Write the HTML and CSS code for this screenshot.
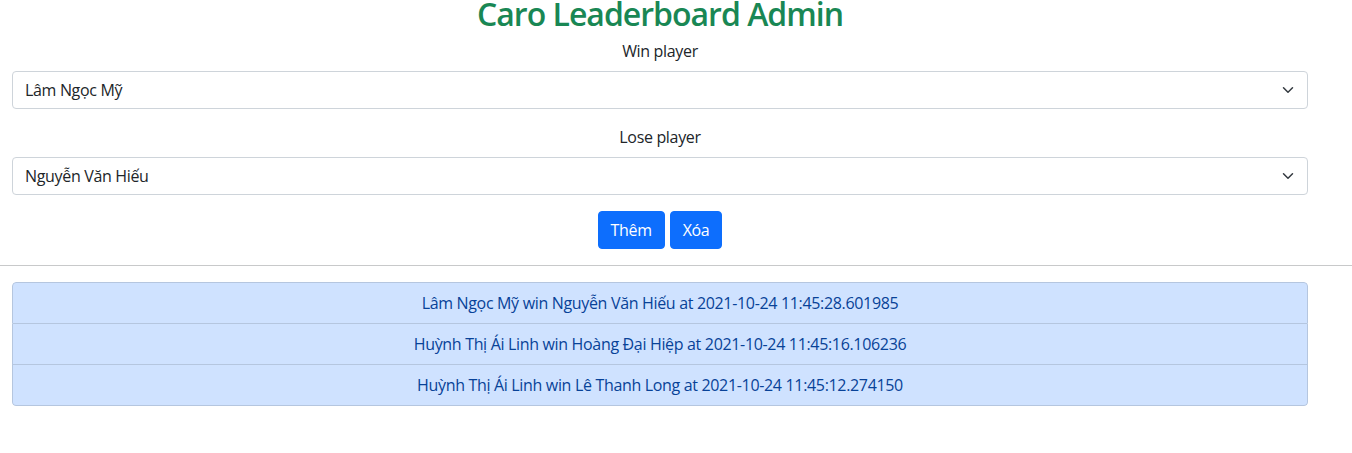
FILE: index.html
```html
<!DOCTYPE html>
<html lang="vi">
<head>
<meta charset="utf-8">
<title>Caro Leaderboard Admin</title>
<link rel="stylesheet" href="styles.css">
</head>
<body>
<div class="container">
  <h1 class="title">Caro Leaderboard Admin</h1>
  <form class="form">
    <div class="field">
      <label class="label" for="win">Win player</label>
      <div class="select-wrap">
        <select id="win" class="select">
          <option>Lâm Ngọc Mỹ</option>
        </select>
        <svg class="chevron" viewBox="0 0 16 16" width="16" height="12" preserveAspectRatio="xMidYMid meet"><path d="m2 5 6 6 6-6" fill="none" stroke="#343a40" stroke-width="2" stroke-linecap="round" stroke-linejoin="round"/></svg>
      </div>
    </div>
    <div class="field">
      <label class="label" for="lose">Lose player</label>
      <div class="select-wrap">
        <select id="lose" class="select">
          <option>Nguyễn Văn Hiếu</option>
        </select>
        <svg class="chevron" viewBox="0 0 16 16" width="16" height="12" preserveAspectRatio="xMidYMid meet"><path d="m2 5 6 6 6-6" fill="none" stroke="#343a40" stroke-width="2" stroke-linecap="round" stroke-linejoin="round"/></svg>
      </div>
    </div>
    <div class="actions">
      <button type="button" class="btn">Thêm</button>
      <button type="button" class="btn">Xóa</button>
    </div>
  </form>
</div>
<hr class="divider">
<div class="container">
  <ul class="list">
    <li class="item">Lâm Ngọc Mỹ win Nguyễn Văn Hiếu at 2021-10-24 11:45:28.601985</li>
    <li class="item">Huỳnh Thị Ái Linh win Hoàng Đại Hiệp at 2021-10-24 11:45:16.106236</li>
    <li class="item">Huỳnh Thị Ái Linh win Lê Thanh Long at 2021-10-24 11:45:12.274150</li>
  </ul>
</div>
</body>
</html>
```
FILE: styles.css
```css
* { box-sizing: border-box; }
html, body {
  margin: 0;
  padding: 0;
  background: #fff;
}
body {
  font-family: "Open Sans", "Noto Sans", sans-serif;
  font-size: 16px;
  line-height: 1.5;
  letter-spacing: -0.33px;
  color: #212529;
}
.container {
  width: 1320px;
  padding: 0 12px;
}
.title {
  margin: 0 0 12px;
  font-size: 32px;
  line-height: 27px;
  font-weight: 600;
  letter-spacing: -1px;
  color: #198754;
  text-align: center;
}
.form { margin: 0; }
.field { margin-bottom: 16px; }
.label {
  display: block;
  text-align: center;
  margin-bottom: 8px;
}
.select-wrap { position: relative; }
.select {
  display: block;
  width: 100%;
  height: 38px;
  padding: 6px 36px 6px 12px;
  font: inherit;
  letter-spacing: inherit;
  color: #212529;
  background: #fff;
  border: 1px solid #ced4da;
  border-radius: 4px;
  -webkit-appearance: none;
  appearance: none;
}
.chevron {
  position: absolute;
  right: 12px;
  top: 13px;
  pointer-events: none;
}
.actions {
  display: flex;
  justify-content: center;
  gap: 5px;
}
.btn {
  font: inherit;
  letter-spacing: inherit;
  line-height: 24px;
  padding: 6px 12px;
  color: #fff;
  background: #0d6efd;
  border: 1px solid #0d6efd;
  border-radius: 4px;
}
.divider {
  margin: 16px 0;
  border: 0;
  border-top: 1px solid #c8c9ca;
  height: 0;
}
.list {
  list-style: none;
  margin: 0;
  padding: 0;
  border-radius: 4px;
  overflow: hidden;
}
.item {
  padding: 8px 16px;
  text-align: center;
  color: #084298;
  background: #cfe2ff;
  border: 1px solid #b5c6df;
  border-top-width: 0;
}
.item:first-child {
  border-top-width: 1px;
  border-radius: 4px 4px 0 0;
}
.item:last-child { border-radius: 0 0 4px 4px; }
```
